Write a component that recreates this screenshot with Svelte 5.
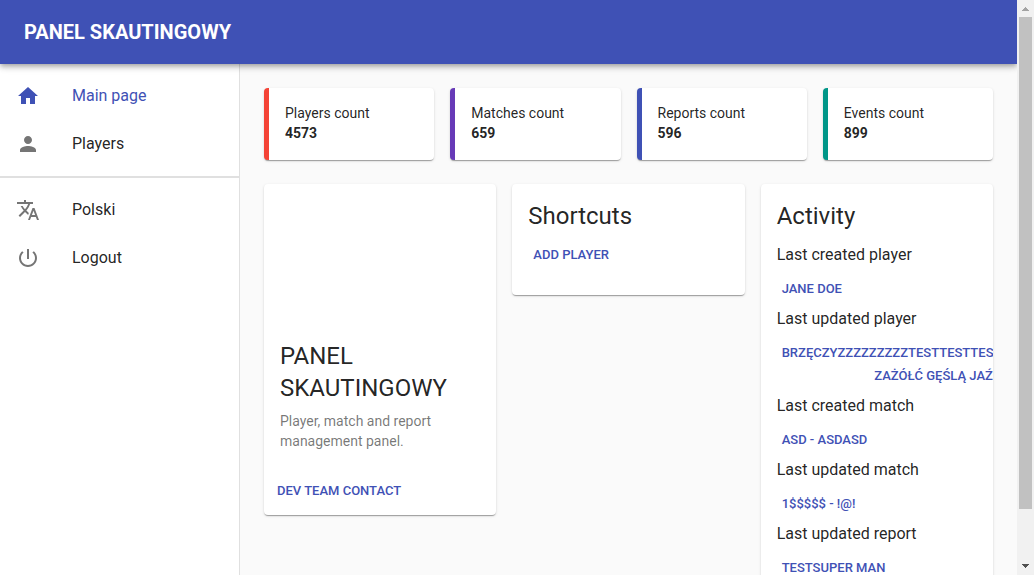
<script>
  const stats = [
    { label: 'Players count', value: 4573, tone: 'red' },
    { label: 'Matches count', value: 659, tone: 'purple' },
    { label: 'Reports count', value: 596, tone: 'indigo' },
    { label: 'Events count', value: 899, tone: 'teal' }
  ];

  const activity = [
    { label: 'Last created player', link: 'Jane Doe' },
    { label: 'Last updated player', link: 'BrzęczyzzzzzzzzzTestTestTestTestTestTest Zażółć Gęślą Jaźń' },
    { label: 'Last created match', link: 'asd - asdasd' },
    { label: 'Last updated match', link: '1$$$$$ - !@!' },
    { label: 'Last updated report', link: 'TestSuper Man' }
  ];
</script>

<div class="window">
  <div class="page">
    <header>
      <a class="brand" href="#home">PANEL SKAUTINGOWY</a>
    </header>
    <div class="body">
      <nav>
        <ul>
          <li>
            <a class="item active" href="#home">
              <svg viewBox="0 0 24 24" aria-hidden="true"><path d="M10 20v-6h4v6h5v-8h3L12 3 2 12h3v8z" /></svg>
              <span>Main page</span>
            </a>
          </li>
          <li>
            <a class="item" href="#players">
              <svg viewBox="0 0 24 24" aria-hidden="true"><path d="M12 12c2.210 0 4-1.790 4-4s-1.790-4-4-4-4 1.790-4 4 1.790 4 4 4zm0 2c-2.670 0-8 1.340-8 4v2h16v-2c0-2.660-5.330-4-8-4z" /></svg>
              <span>Players</span>
            </a>
          </li>
        </ul>
        <ul class="second">
          <li>
            <button class="item" type="button">
              <svg viewBox="0 0 24 24" aria-hidden="true"><path d="M12.870 15.070l-2.540-2.510.030-.030c1.740-1.940 2.980-4.170 3.710-6.530H17V4h-7V2H8v2H1v1.990h11.170C11.500 7.920 10.440 9.750 9 11.350 8.070 10.320 7.300 9.190 6.690 8h-2c.730 1.630 1.730 3.170 2.980 4.560l-5.090 5.020L4 19l5-5 3.110 3.110.760-2.040zM18.500 10h-2L12 22h2l1.120-3h4.750L21 22h2l-4.500-12zm-2.620 7l1.620-4.330L19.120 17h-3.240z" /></svg>
              <span>Polski</span>
            </button>
          </li>
          <li>
            <button class="item" type="button">
              <svg viewBox="0 0 24 24" aria-hidden="true"><path d="M13 3h-2v10h2V3zm4.830 2.170l-1.420 1.420C17.990 7.860 19 9.810 19 12c0 3.870-3.130 7-7 7s-7-3.130-7-7c0-2.190 1.010-4.140 2.580-5.420L6.170 5.170C4.230 6.820 3 9.260 3 12c0 4.970 4.030 9 9 9s9-4.030 9-9c0-2.740-1.230-5.180-3.170-6.830z" /></svg>
              <span>Logout</span>
            </button>
          </li>
        </ul>
      </nav>

      <main>
        <section class="stats">
          {#each stats as stat}
            <div class="card stat {stat.tone}">
              <p>{stat.label}</p>
              <strong>{stat.value}</strong>
            </div>
          {/each}
        </section>

        <section class="panels">
          <article class="card">
            <div class="media"></div>
            <div class="intro">
              <h2>PANEL SKAUTINGOWY</h2>
              <p>Player, match and report management panel.</p>
            </div>
            <div class="actions">
              <button class="link" type="button">Dev team contact</button>
            </div>
          </article>

          <article class="card content">
            <h2>Shortcuts</h2>
            <a class="link" href="#new-player">Add player</a>
          </article>

          <article class="card content">
            <h2>Activity</h2>
            {#each activity as entry}
              <div class="entry">
                <p>{entry.label}</p>
                <a class="link" href="#details">{entry.link}</a>
              </div>
            {/each}
          </article>
        </section>
      </main>
    </div>
  </div>

  <div class="scrollbar" aria-hidden="true">
    <svg class="arrow up" viewBox="0 0 17 17"><path d="M8 7h1v1h1v1h1v1h1v1H5v-1h1V9h1V8h1z" /></svg>
    <div class="track"><div class="thumb"></div></div>
    <svg class="arrow" viewBox="0 0 17 17"><path d="M5 6h7v1h-1v1h-1v1H9v1H8V9H7V8H6V7H5z" /></svg>
  </div>
</div>

<style>
  :global(body) {
    margin: 0;
    background: #fafafa;
  }

  .window {
    display: flex;
    height: 100vh;
    overflow: hidden;
    color: rgba(0, 0, 0, 0.87);
    font-family: Roboto, sans-serif;
    font-size: 16px;
    line-height: 24px;
  }

  h2,
  p,
  ul {
    margin: 0;
    padding: 0;
  }

  .page {
    flex: 1;
    min-width: 0;
    display: flex;
    flex-direction: column;
    overflow: hidden;
  }

  header {
    flex: none;
    position: relative;
    z-index: 1;
    display: flex;
    align-items: center;
    height: 64px;
    padding: 0 24px;
    background: #3f51b5;
    box-shadow: 0 2px 4px -1px rgba(0, 0, 0, 0.2), 0 4px 5px 0 rgba(0, 0, 0, 0.14), 0 1px 10px 0 rgba(0, 0, 0, 0.12);
  }

  .brand {
    color: #fff;
    font-size: 20px;
    font-weight: 700;
    line-height: 32px;
    text-decoration: none;
  }

  .body {
    flex: 1;
    min-height: 0;
    display: flex;
  }

  nav {
    flex: none;
    box-sizing: border-box;
    width: 240px;
    background: #fff;
    border-right: 1px solid #e0e0e0;
  }

  nav ul {
    padding: 8px 0;
    list-style: none;
  }

  nav .second {
    border-top: 2px solid #e0e0e0;
  }

  .item {
    display: flex;
    align-items: center;
    gap: 32px;
    box-sizing: border-box;
    width: 100%;
    height: 48px;
    padding: 0 16px;
    border: 0;
    background: none;
    color: inherit;
    font: inherit;
    text-align: left;
    text-decoration: none;
    cursor: pointer;
  }

  .item svg {
    width: 24px;
    height: 24px;
    fill: #757575;
  }

  .item.active {
    color: #3f51b5;
  }

  .item.active svg {
    fill: #3f51b5;
  }

  main {
    flex: 1;
    min-width: 0;
    padding: 24px;
  }

  .stats,
  .panels {
    display: grid;
    grid-template-columns: repeat(4, minmax(0, 1fr));
    gap: 16px;
  }

  .panels {
    grid-template-columns: repeat(3, minmax(0, 1fr));
    align-items: start;
    margin-top: 24px;
  }

  .card {
    overflow: hidden;
    border-radius: 4px;
    background: #fff;
    box-shadow: 0 2px 1px -1px rgba(0, 0, 0, 0.2), 0 1px 1px 0 rgba(0, 0, 0, 0.14), 0 1px 3px 0 rgba(0, 0, 0, 0.12);
  }

  .stat {
    padding: 15px 16px 17px;
    border-left: 5px solid;
    font-size: 14px;
    line-height: 20px;
  }

  .stat strong {
    display: block;
  }

  .red { border-color: #f44336; }
  .purple { border-color: #673ab7; }
  .indigo { border-color: #3f51b5; }
  .teal { border-color: #009688; }

  .media {
    height: 140px;
  }

  h2 {
    margin-bottom: 8px;
    font-size: 24px;
    font-weight: 400;
    line-height: 32px;
  }

  .intro {
    padding: 16px 16px 17px;
  }

  .intro h2 {
    margin-bottom: 7px;
  }

  .intro p {
    color: rgba(0, 0, 0, 0.54);
    font-size: 14px;
    line-height: 20px;
  }

  .actions {
    display: flex;
    padding: 8px 8px 9px;
  }

  .content {
    padding: 16px 16px 25px;
  }

  .link {
    display: inline-block;
    padding: 3px 5px 4px;
    border: 0;
    background: none;
    color: #3f51b5;
    font-family: inherit;
    font-size: 13px;
    font-weight: 500;
    line-height: 23px;
    text-align: center;
    text-decoration: none;
    text-transform: uppercase;
    vertical-align: top;
    cursor: pointer;
  }

  .entry {
    padding-top: 3px;
  }

  .entry p {
    margin-bottom: 7px;
  }

  .scrollbar {
    flex: none;
    display: flex;
    flex-direction: column;
    width: 17px;
    background: #f1f1f1;
  }

  .arrow {
    flex: none;
    width: 17px;
    height: 17px;
    fill: #505050;
  }

  .arrow.up {
    fill: #a3a3a3;
  }

  .track {
    flex: 1;
    padding: 0 2px;
  }

  .thumb {
    height: 91%;
    background: #c1c1c1;
  }
</style>
